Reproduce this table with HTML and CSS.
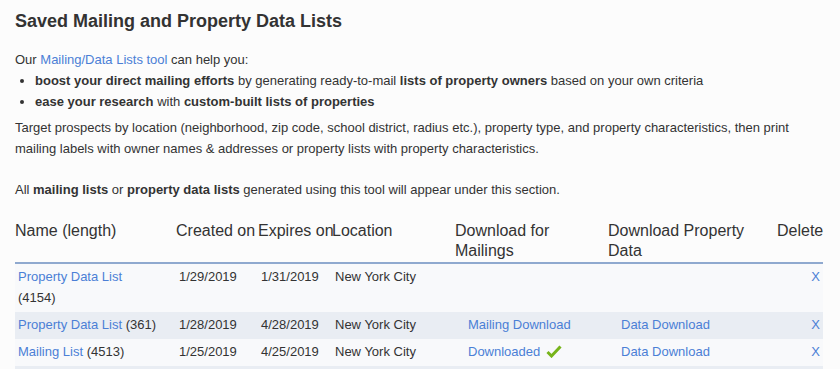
FILE: index.html
```html
<!DOCTYPE html>
<html>
<head>
    <title>Saved Mailing and Property Data Lists</title>
    <link rel="stylesheet" href="styles.css">
</head>
<body>
    <div class="lists-section">
        <h2>Saved Mailing and Property Data Lists</h2>

        <p class="intro">Our <a href="#">Mailing/Data Lists tool</a> can help you:</p>
        <ul class="benefits">
            <li><b>boost your direct mailing efforts</b> by generating ready-to-mail <b>lists of property owners</b> based on your own criteria</li>
            <li><b>ease your research</b> with <b>custom-built lists of properties</b></li>
        </ul>
        <p>Target prospects by location (neighborhood, zip code, school district, radius etc.), property type, and property characteristics, then print mailing labels with owner names &amp; addresses or property lists with property characteristics.</p>
        <p class="note">All <b>mailing lists</b> or <b>property data lists</b> generated using this tool will appear under this section.</p>

        <table class="lists-table">
            <colgroup>
                <col class="c-name">
                <col class="c-created">
                <col class="c-expires">
                <col class="c-location">
                <col class="c-mail">
                <col class="c-data">
                <col class="c-delete">
            </colgroup>
            <thead>
                <tr>
                    <th>Name (length)</th>
                    <th class="nowrap">Created on</th>
                    <th class="nowrap">Expires on</th>
                    <th>Location</th>
                    <th>Download for Mailings</th>
                    <th>Download Property Data</th>
                    <th class="del">Delete</th>
                </tr>
            </thead>
            <tbody>
                <tr>
                    <td class="name"><a href="#">Property Data List</a> (4154)</td>
                    <td>1/29/2019</td>
                    <td>1/31/2019</td>
                    <td>New York City</td>
                    <td class="dl"></td>
                    <td class="dl"></td>
                    <td class="del"><a href="#">X</a></td>
                </tr>
                <tr class="stripe">
                    <td class="name"><a href="#">Property Data List</a> (361)</td>
                    <td>1/28/2019</td>
                    <td>4/28/2019</td>
                    <td>New York City</td>
                    <td class="dl"><a href="#">Mailing Download</a></td>
                    <td class="dl"><a href="#">Data Download</a></td>
                    <td class="del"><a href="#">X</a></td>
                </tr>
                <tr>
                    <td class="name"><a href="#">Mailing List</a> (4513)</td>
                    <td>1/25/2019</td>
                    <td>4/25/2019</td>
                    <td>New York City</td>
                    <td class="dl"><a href="#">Downloaded</a>
                        <svg class="check" width="16" height="13" viewBox="0 0 16 13"><path d="M1.5 7 L5.5 11 L14.5 1.5" fill="none" stroke="#77b41a" stroke-width="3"/></svg>
                    </td>
                    <td class="dl"><a href="#">Data Download</a></td>
                    <td class="del"><a href="#">X</a></td>
                </tr>
                <tr class="stripe">
                    <td>&nbsp;</td><td></td><td></td><td></td><td></td><td></td><td></td>
                </tr>
            </tbody>
        </table>
    </div>
</body>
</html>
```

FILE: styles.css
```css
body {
    margin: 0;
    padding: 8px 15px 0 15px;
    background-color: #fcfcfc;
    font-family: "Liberation Sans", Arial, sans-serif;
    font-size: 13px;
    color: #333;
    overflow: hidden;
}
a {
    color: #4b7fd6;
    text-decoration: none;
}
h2 {
    font-size: 18px;
    font-weight: bold;
    margin: 0 0 16px 0;
    line-height: 26px;
}
p {
    margin: 0;
    line-height: 21px;
}
.intro {
    line-height: 20px;
}
.benefits {
    margin: 0 0 5px 0;
    padding-left: 20px;
    line-height: 21px;
}
.note {
    margin-top: 20px;
}
.lists-table {
    margin-top: 21px;
    width: 808px;
    table-layout: fixed;
    border-collapse: collapse;
    background-color: #f8f9fb;
}
.c-name { width: 161px; }
.c-created { width: 82px; }
.c-expires { width: 74px; }
.c-location { width: 123px; }
.c-mail { width: 153px; }
.c-data { width: 169px; }
.c-delete { width: 46px; }
.lists-table th {
    font-size: 16px;
    font-weight: normal;
    text-align: left;
    vertical-align: top;
    line-height: 20px;
    padding: 0 0 1px 0;
    border-bottom: 2px solid #8fa9cf;
    background-color: #fcfcfc;
}
.lists-table th.nowrap {
    white-space: nowrap;
}
.lists-table th.del {
    text-align: right;
}
.lists-table td {
    vertical-align: top;
    line-height: 21px;
    padding: 2px 3px 4px 3px;
}
.lists-table td.name {
    padding-right: 18px;
}
.lists-table td.dl {
    padding-left: 13px;
}
.lists-table td.del {
    text-align: right;
}
.lists-table tr.stripe td {
    background-color: #e9edf3;
}
.check {
    vertical-align: -2px;
    margin-left: 2px;
}
```
